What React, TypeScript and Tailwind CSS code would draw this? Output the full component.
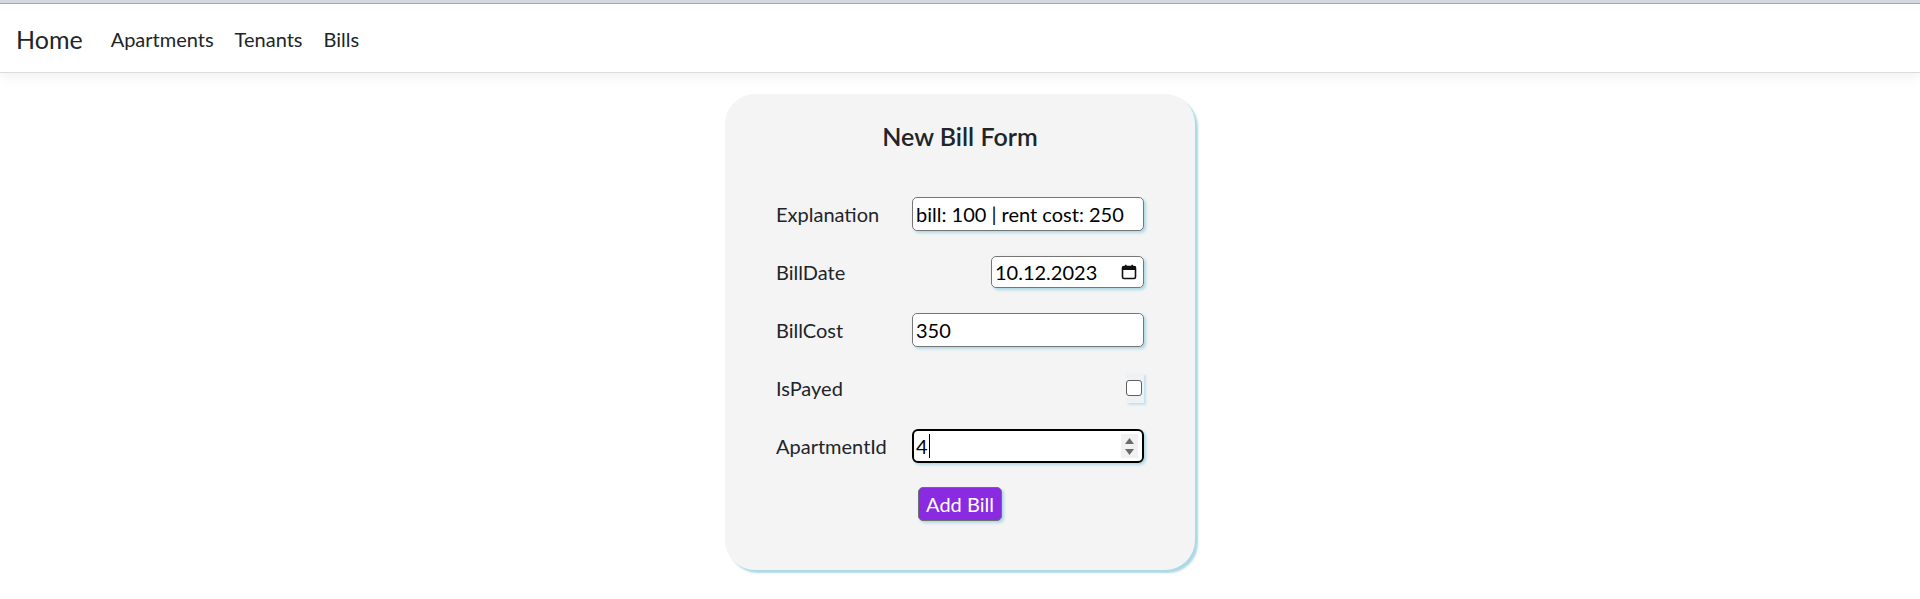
import React from "react";

function CalendarIcon() {
  return (
    <svg width="16" height="16" viewBox="0 0 16 16" className="shrink-0">
      <rect x="1.5" y="2.5" width="13" height="12" rx="1.5" fill="none" stroke="#111" strokeWidth="1.6" />
      <rect x="1.5" y="2.5" width="13" height="3.5" fill="#111" />
      <rect x="4" y="0.8" width="1.6" height="3" fill="#111" />
      <rect x="10.4" y="0.8" width="1.6" height="3" fill="#111" />
    </svg>
  );
}

function Spinner() {
  return (
    <div className="flex h-full w-[17px] flex-col items-center justify-center gap-[5px] bg-[#f1f1f1]">
      <svg width="9" height="6" viewBox="0 0 9 6">
        <path d="M4.5 0 L9 6 L0 6 Z" fill="#6b6b6b" />
      </svg>
      <svg width="9" height="6" viewBox="0 0 9 6">
        <path d="M0 0 L9 0 L4.5 6 Z" fill="#6b6b6b" />
      </svg>
    </div>
  );
}

export default function App() {
  const font = { fontFamily: "Lato, 'Open Sans', sans-serif" };
  return (
    <div className="min-h-screen bg-white text-[#212529]" style={font}>
      <div className="h-[3px] bg-[#d4d9e4]" />
      <div className="h-px bg-[#a3a8b2]" />
      <nav className="flex h-[69px] items-center border-b border-[#dcdcdc] bg-white px-4 pt-[2px] shadow-[0_4px_12px_rgba(0,0,0,0.06)]">
        <span className="mr-[28px] text-[25px] leading-none text-[#212529]">Home</span>
        <span className="mr-[21px] text-[20px] text-[#212529]">Apartments</span>
        <span className="mr-[21px] text-[20px] text-[#212529]">Tenants</span>
        <span className="text-[20px] text-[#212529]">Bills</span>
      </nav>

      <div className="mx-auto mt-[21px] flex h-[476px] w-[470px] flex-col items-center rounded-[30px] bg-[#f4f4f4] pt-[27px] shadow-[3px_3px_2px_#add8e6]">
        <h4 className="h-[30px] text-[25px] font-semibold leading-[30px] text-[#212529]">New Bill Form</h4>

        <div className="mt-[46px] flex w-[368px] flex-col gap-[24px]">
          <div className="flex h-[34px] items-center justify-between">
            <span className="text-[20px]">Explanation</span>
            <div className="flex h-[34px] w-[232px] items-center rounded-[5px] border border-[#767676] bg-white pl-[3px] text-[20px] text-black shadow-[2px_2px_3px_#add8e6]">
              bill: 100 | rent cost: 250
            </div>
          </div>

          <div className="flex h-[34px] items-center justify-between">
            <span className="text-[20px]">BillDate</span>
            <div className="flex h-[32px] w-[153px] items-center justify-between rounded-[5px] border border-[#767676] bg-white pl-[3px] pr-[6px] text-[20px] text-black shadow-[2px_2px_3px_#add8e6]">
              <span>10.12.2023</span>
              <CalendarIcon />
            </div>
          </div>

          <div className="flex h-[34px] items-center justify-between">
            <span className="text-[20px]">BillCost</span>
            <div className="flex h-[34px] w-[232px] items-center rounded-[5px] border border-[#767676] bg-white pl-[3px] text-[20px] text-black shadow-[2px_2px_3px_#add8e6]">
              350
            </div>
          </div>

          <div className="flex h-[34px] items-center justify-between">
            <span className="text-[20px]">IsPayed</span>
            <div className="flex h-[30px] w-[18px] items-center justify-start bg-[#eef2f4] shadow-[2px_2px_2px_#c4e3ec]">
              <div className="h-[16px] w-[16px] rounded-[3px] border border-[#5f5f5f] bg-white" />
            </div>
          </div>

          <div className="flex h-[34px] items-center justify-between">
            <span className="text-[20px]">ApartmentId</span>
            <div className="flex h-[34px] w-[232px] items-center justify-between rounded-[6px] border-2 border-black bg-white pl-[2px] pr-[4px] text-[20px] text-black shadow-[2px_2px_3px_#add8e6]">
              <span className="flex items-center">
                4<span className="ml-px inline-block h-[24px] w-px bg-black" />
              </span>
              <div className="h-[24px]">
                <Spinner />
              </div>
            </div>
          </div>
        </div>

        <button className="mt-[24px] flex h-[34px] w-[84px] items-center justify-center rounded-[5px] border border-[#6f6f6f] bg-[#8a2be2] text-[20px] text-white shadow-[2px_2px_3px_#add8e6]">
          Add Bill
        </button>
      </div>
    </div>
  );
}
